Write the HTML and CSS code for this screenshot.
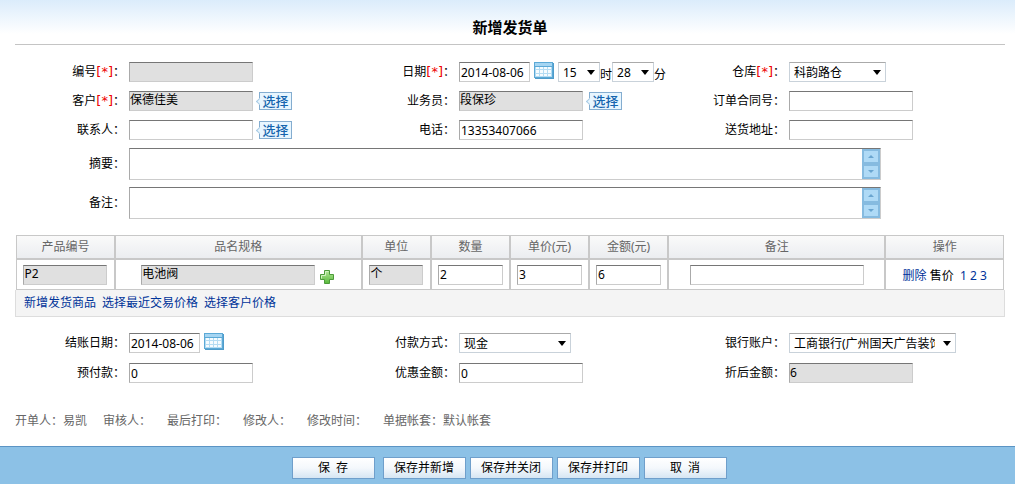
FILE: index.html
```
<!DOCTYPE html>
<html lang="zh-CN">
  <head>
    <meta charset="utf-8">
    <title>新增发货单</title>
    <meta name="viewport" content="width=device-width, initial-scale=1.0">
    <link rel="stylesheet" href="styles.css">
  </head>
  <body>
    <form class="page">
      <div class="content">
        <h1 class="title">新增发货单</h1>

        <div class="form-grid form-top">
          <div class="field">
            <label class="label" for="code">编号<span class="must">[*]</span>：</label>
            <input class="text" id="code" type="text" readonly>
          </div>
          <div class="field">
            <label class="label" for="date">日期<span class="must">[*]</span>：</label>
            <input class="text date" id="date" type="text" value="2014-08-06">
            <button class="calendar" type="button" aria-label="日历">
              <svg width="20" height="17" viewBox="0 0 20 17">
                <path d="M1 1h19v16h-19z" fill="#4f9ccb"/>
                <path d="M0 0h19v16h-19z" fill="#5ba9d6"/>
                <path d="M1 1h17v3h-17z" fill="#a5d5f2"/>
                <path d="M1 5h17v10h-17z" fill="#b4dcf3"/>
                <path d="M2 5h3v2h-3z M6 5h3v2h-3z M10 5h3v2h-3z M14 5h3v2h-3z M2 8h3v3h-3z M6 8h3v3h-3z M10 8h3v3h-3z M14 8h3v3h-3z M2 12h3v2h-3z M6 12h3v2h-3z M10 12h3v2h-3z M14 12h3v2h-3z" fill="#f6fcff"/>
              </svg>
            </button>
            <select class="select time" id="hour" aria-label="时"><option>15</option></select>
            <label class="unit" for="hour">时</label>
            <select class="select time" id="minute" aria-label="分"><option>28</option></select>
            <label class="unit" for="minute">分</label>
          </div>
          <div class="field">
            <label class="label" for="store">仓库<span class="must">[*]</span>：</label>
            <select class="select store" id="store"><option>科韵路仓</option></select>
          </div>

          <div class="field">
            <label class="label" for="customer">客户<span class="must">[*]</span>：</label>
            <input class="text" id="customer" type="text" value="保德佳美" readonly>
            <button class="choose" type="button">选择</button>
          </div>
          <div class="field">
            <label class="label" for="clerk">业务员：</label>
            <input class="text" id="clerk" type="text" value="段保珍" readonly>
            <button class="choose" type="button">选择</button>
          </div>
          <div class="field">
            <label class="label" for="contract">订单合同号：</label>
            <input class="text" id="contract" type="text">
          </div>

          <div class="field">
            <label class="label" for="contact">联系人：</label>
            <input class="text" id="contact" type="text">
            <button class="choose" type="button">选择</button>
          </div>
          <div class="field">
            <label class="label" for="phone">电话：</label>
            <input class="text" id="phone" type="text" value="13353407066">
          </div>
          <div class="field">
            <label class="label" for="address">送货地址：</label>
            <input class="text" id="address" type="text">
          </div>
        </div>

        <div class="memo">
          <label class="label" for="summary">摘要：</label>
          <div class="memo-box">
            <textarea class="memo-text" id="summary"></textarea>
            <div class="scroller">
              <button type="button" aria-label="上"><svg width="6" height="3" viewBox="0 0 6 3"><path d="M3 0L6 3H0z" fill="#6aa5d0"/></svg></button>
              <button type="button" aria-label="下"><svg width="6" height="3" viewBox="0 0 6 3"><path d="M3 3L6 0H0z" fill="#6aa5d0"/></svg></button>
            </div>
          </div>
        </div>
        <div class="memo">
          <label class="label" for="remark">备注：</label>
          <div class="memo-box">
            <textarea class="memo-text" id="remark"></textarea>
            <div class="scroller">
              <button type="button" aria-label="上"><svg width="6" height="3" viewBox="0 0 6 3"><path d="M3 0L6 3H0z" fill="#6aa5d0"/></svg></button>
              <button type="button" aria-label="下"><svg width="6" height="3" viewBox="0 0 6 3"><path d="M3 3L6 0H0z" fill="#6aa5d0"/></svg></button>
            </div>
          </div>
        </div>

        <div class="goods">
          <table class="goods-table">
            <colgroup>
              <col class="c-code"><col class="c-name"><col class="c-unit">
              <col class="c-num"><col class="c-num"><col class="c-num">
              <col class="c-remark"><col class="c-action">
            </colgroup>
            <thead>
              <tr>
                <th>产品编号</th>
                <th>品名规格</th>
                <th>单位</th>
                <th>数量</th>
                <th>单价(元)</th>
                <th>金额(元)</th>
                <th>备注</th>
                <th>操作</th>
              </tr>
            </thead>
            <tbody>
              <tr>
                <td><input class="text plain w-code" type="text" value="P2" aria-label="产品编号" readonly></td>
                <td>
                  <div class="name-cell">
                    <input class="text w-name" type="text" value="电池阀" aria-label="品名规格" readonly>
                    <button class="add" type="button" aria-label="添加">
                      <svg width="16" height="16" viewBox="0 0 16 16">
                        <defs>
                          <linearGradient id="green" x1="0" y1="0" x2="0" y2="1">
                            <stop offset="0" stop-color="#b5e89a"/>
                            <stop offset="1" stop-color="#58b93a"/>
                          </linearGradient>
                        </defs>
                        <path d="M5.500 1.500h5v4h4v5h-4v4h-5v-4h-4v-5h4z" fill="url(#green)" stroke="#4c9a3a" stroke-linejoin="round"/>
                        <path d="M6.500 6.500v-4h3 M2.500 9.500v-3h4" fill="none" stroke="#d3f3c2"/>
                      </svg>
                    </button>
                  </div>
                </td>
                <td><input class="text w-unit" type="text" value="个" aria-label="单位" readonly></td>
                <td><input class="text w-num" type="text" value="2" aria-label="数量"></td>
                <td><input class="text w-num" type="text" value="3" aria-label="单价"></td>
                <td><input class="text w-num" type="text" value="6" aria-label="金额"></td>
                <td><input class="text w-name" type="text" aria-label="备注"></td>
                <td><a href="#">删除</a> 售价 &nbsp;<a href="#">1</a> <a href="#">2</a> <a href="#">3</a></td>
              </tr>
            </tbody>
          </table>
          <div class="goods-links">
            <a href="#">新增发货商品</a>
            <a href="#">选择最近交易价格</a>
            <a href="#">选择客户价格</a>
          </div>
        </div>

        <div class="form-grid form-pay">
          <div class="field">
            <label class="label" for="payDate">结账日期：</label>
            <input class="text date" id="payDate" type="text" value="2014-08-06">
            <button class="calendar" type="button" aria-label="日历">
              <svg width="20" height="17" viewBox="0 0 20 17">
                <path d="M1 1h19v16h-19z" fill="#4f9ccb"/>
                <path d="M0 0h19v16h-19z" fill="#5ba9d6"/>
                <path d="M1 1h17v3h-17z" fill="#a5d5f2"/>
                <path d="M1 5h17v10h-17z" fill="#b4dcf3"/>
                <path d="M2 5h3v2h-3z M6 5h3v2h-3z M10 5h3v2h-3z M14 5h3v2h-3z M2 8h3v3h-3z M6 8h3v3h-3z M10 8h3v3h-3z M14 8h3v3h-3z M2 12h3v2h-3z M6 12h3v2h-3z M10 12h3v2h-3z M14 12h3v2h-3z" fill="#f6fcff"/>
              </svg>
            </button>
          </div>
          <div class="field">
            <label class="label" for="payType">付款方式：</label>
            <select class="select pay" id="payType"><option>现金</option></select>
          </div>
          <div class="field">
            <label class="label" for="bank">银行账户：</label>
            <select class="select bank" id="bank"><option>工商银行(广州国天广告装饰)</option></select>
          </div>

          <div class="field">
            <label class="label" for="prepaid">预付款：</label>
            <input class="text" id="prepaid" type="text" value="0">
          </div>
          <div class="field">
            <label class="label" for="discount">优惠金额：</label>
            <input class="text" id="discount" type="text" value="0">
          </div>
          <div class="field">
            <label class="label" for="total">折后金额：</label>
            <input class="text plain" id="total" type="text" value="6" readonly>
          </div>
        </div>

        <div class="info">
          <span>开单人：易凯</span>
          <span>审核人：</span>
          <span>最后打印：</span>
          <span>修改人：</span>
          <span>修改时间：</span>
          <span>单据帐套：默认帐套</span>
        </div>
      </div>

      <div class="footer">
        <button class="btn btn-save" type="button">保&nbsp; 存</button>
        <button class="btn" type="button">保存并新增</button>
        <button class="btn" type="button">保存并关闭</button>
        <button class="btn" type="button">保存并打印</button>
        <button class="btn" type="button">取&nbsp; 消</button>
      </div>
    </form>
  </body>
</html>
```

FILE: styles.css
```
* {
  box-sizing: border-box;
}

body {
  margin: 0;
  color: #000;
  background: #fff linear-gradient(#dbecfb, #fff) no-repeat 0 0 / 100% 34px;
}

body, input, select, textarea, button {
  font-family: "Noto Sans", "Noto Sans CJK SC", sans-serif;
  font-size: 12px;
}

button {
  padding: 0;
  border: none;
  background: none;
  cursor: pointer;
}

svg {
  display: block;
}

a {
  color: #039;
  text-decoration: none;
}

.page {
  display: flex;
  flex-direction: column;
  min-height: 100vh;
}

.content {
  padding: 0 10px 0 15px;
}

.title {
  margin: 0;
  padding-top: 10px;
  height: 45px;
  line-height: 34px;
  font-size: 15px;
  text-align: center;
  border-bottom: 1px solid #c4c4c4;
}

/* form rows */
.form-grid {
  display: grid;
  grid-template-columns: repeat(3, 1fr);
}

.form-top {
  row-gap: 9px;
  padding-top: 17px;
}

.form-pay {
  row-gap: 10px;
  padding-top: 16px;
}

.field {
  display: flex;
  align-items: center;
  height: 20px;
  white-space: nowrap;
}

.label {
  flex: none;
  width: 114px;
  padding-right: 4px;
  line-height: 20px;
  text-align: right;
}

.must {
  color: #e00;
  font-family: "DejaVu Sans", sans-serif;
  font-size: 13px;
}

.text {
  width: 124px;
  height: 20px;
  padding: 0 1px;
  border: 1px solid #ccc;
  border-top-color: #767676;
  border-left-color: #aaa;
  border-radius: 0;
  background: #fff;
  outline: none;
}

/* locked boxes keep their text in the top left corner */
.text[readonly] {
  padding: 0 0 4px;
  background: #e0e0e0;
}

.text.plain {
  padding-bottom: 2px;
}

.date {
  width: 71px;
}

.calendar {
  align-self: flex-start;
  margin: 0 4px;
}

.select {
  appearance: none;
  height: 20px;
  padding: 0 20px 0 4px;
  border: 1px solid #c9d2da;
  border-top-color: #aaa;
  border-radius: 0;
  color: #000;
  background: #fff url("data:image/svg+xml,%3Csvg xmlns='http://www.w3.org/2000/svg' width='8' height='5'%3E%3Cpath d='M0 0h8L4 5z'/%3E%3C/svg%3E") no-repeat right 4px center;
  outline: none;
}

.time {
  width: 42px;
  padding-right: 14px;
}

.store {
  width: 97px;
}

.pay {
  width: 112px;
}

.bank {
  width: 167px;
}

.unit {
  align-self: flex-end;
  line-height: 14px;
}

.choose {
  position: relative;
  width: 33px;
  height: 18px;
  margin-left: 6px;
  border: 1px solid #84add0;
  background: #e8f6ff;
  color: #1565ae;
  font-size: 13px;
  font-weight: 500;
  line-height: 16px;
}

.choose::before {
  content: "";
  position: absolute;
  left: -3px;
  top: 6px;
  width: 4px;
  height: 4px;
  border: 1px solid #a9cbe4;
  border-top: none;
  border-right: none;
  background: #e8f6ff;
  transform: rotate(45deg);
}

/* long text boxes */
.memo {
  display: flex;
  align-items: center;
  margin-top: 7px;
}

.form-top + .memo {
  margin-top: 8px;
}

.memo-box {
  display: flex;
  width: 76%;
  height: 32px;
  border: 1px solid #ccc;
  border-top-color: #767676;
  border-left-color: #aaa;
}

.memo-text {
  flex: 1;
  padding: 2px;
  border: none;
  outline: none;
  resize: none;
}

.scroller {
  display: flex;
  flex-direction: column;
  gap: 4px;
  padding: 2px;
  background: #86bbe0;
}

.scroller button {
  display: flex;
  flex: 1;
  align-items: center;
  justify-content: center;
  width: 14px;
  background: #afdaf6;
}

/* goods */
.goods {
  margin-top: 16px;
}

.goods-table {
  width: 100%;
  table-layout: fixed;
  border-collapse: separate;
  border-spacing: 0;
  border: 0 solid #fff;
  border-width: 0 1px;
}

.c-code { width: 10%; }
.c-name { width: 25%; }
.c-unit { width: 7%; }
.c-num { width: 8%; }
.c-remark { width: 22%; }
.c-action { width: 12%; }

.goods-table th,
.goods-table td {
  padding: 0;
  border: 1px solid #c8c8c8;
  text-align: center;
  white-space: nowrap;
}

.goods-table th {
  height: 24px;
  color: #666;
  font-weight: normal;
  line-height: 20px;
  background: linear-gradient(#fafafa, #ebedf0);
}

.goods-table td {
  height: 31px;
}

.goods-table .text {
  display: inline-block;
  vertical-align: middle;
}

.w-code { width: 84px; }
.w-name { width: 174px; }
.w-unit { width: 54px; }
.w-num { width: 65px; }

.name-cell {
  display: flex;
  align-items: center;
  justify-content: center;
}

.add {
  align-self: flex-end;
  margin-left: 4px;
}

.goods-links {
  display: flex;
  gap: 6px;
  height: 27px;
  padding-left: 8px;
  line-height: 26px;
  background: #f4f4f4;
  border: 1px solid #ddd;
  border-top: none;
}

.info {
  display: flex;
  gap: 16px;
  padding: 28px 0 14px;
  line-height: 20px;
  color: #666;
}

/* bottom bar */
.footer {
  display: flex;
  justify-content: center;
  gap: 4px;
  margin-top: auto;
  padding: 10px 12px 5px 15px;
  border-top: 1px solid #5b94c4;
  background: #8cc1e6;
}

.btn {
  width: 83px;
  height: 22px;
  border: 1px solid #6f9fcb;
  background: linear-gradient(#fff, #f4f8fc 50%, #d6e6f3);
  line-height: 20px;
}

.btn-save {
  margin-right: 4px;
}
```
